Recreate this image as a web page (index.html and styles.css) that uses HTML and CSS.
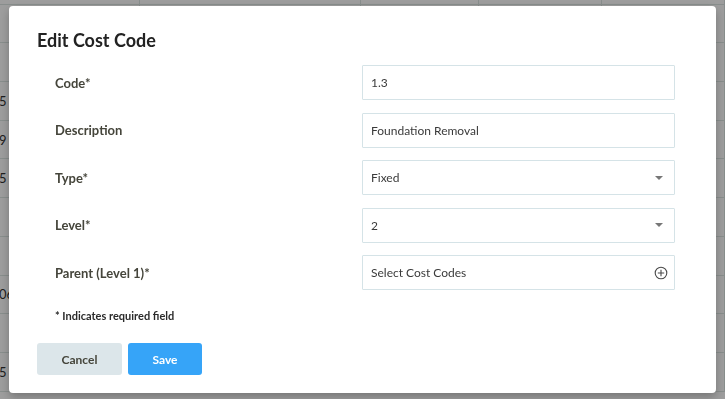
FILE: index.html
```html
<!DOCTYPE html>
<html lang="en">
<head>
    <meta charset="UTF-8">
    <meta name="viewport" content="width=device-width, initial-scale=1.0">
    <title>Edit Cost Code</title>
    <link rel="stylesheet" href="styles.css">
</head>
<body>

<!-- Table behind the modal -->
<div class="sheet">
    <div class="row"><div class="cell"></div><div class="cell"></div><div class="cell"></div><div class="cell"></div><div class="cell"></div></div>
    <div class="row"><div class="cell"></div><div class="cell"></div><div class="cell"></div><div class="cell"></div><div class="cell"></div></div>
    <div class="row"><div class="cell"></div><div class="cell"></div><div class="cell"></div><div class="cell"></div><div class="cell"></div></div>
    <div class="row"><div class="cell">5</div><div class="cell"></div><div class="cell"></div><div class="cell"></div><div class="cell"></div></div>
    <div class="row"><div class="cell">9</div><div class="cell"></div><div class="cell"></div><div class="cell"></div><div class="cell"></div></div>
    <div class="row"><div class="cell">5</div><div class="cell"></div><div class="cell"></div><div class="cell"></div><div class="cell"></div></div>
    <div class="row"><div class="cell"></div><div class="cell"></div><div class="cell"></div><div class="cell"></div><div class="cell"></div></div>
    <div class="row"><div class="cell"></div><div class="cell"></div><div class="cell"></div><div class="cell"></div><div class="cell"></div></div>
    <div class="row"><div class="cell">06</div><div class="cell"></div><div class="cell"></div><div class="cell"></div><div class="cell"></div></div>
    <div class="row"><div class="cell"></div><div class="cell"></div><div class="cell"></div><div class="cell"></div><div class="cell"></div></div>
    <div class="row"><div class="cell">5</div><div class="cell"></div><div class="cell"></div><div class="cell"></div><div class="cell"></div></div>
</div>

<div class="overlay">
    <div class="modal">
        <h2>Edit Cost Code</h2>

        <div class="form-grid">
            <label for="code">Code*</label>
            <input type="text" id="code" class="field" value="1.3">

            <label for="description">Description</label>
            <input type="text" id="description" class="field" value="Foundation Removal">

            <label>Type*</label>
            <div class="field select">
                <span>Fixed</span>
                <svg class="caret" width="8" height="4" viewBox="0 0 8 4"><path d="M0 0h8L4 4z" fill="#777"/></svg>
            </div>

            <label>Level*</label>
            <div class="field select">
                <span>2</span>
                <svg class="caret" width="8" height="4" viewBox="0 0 8 4"><path d="M0 0h8L4 4z" fill="#777"/></svg>
            </div>

            <label>Parent (Level 1)*</label>
            <div class="field select">
                <span>Select Cost Codes</span>
                <svg class="plus" width="14" height="14" viewBox="0 0 14 14">
                    <circle cx="7" cy="7" r="5.8" fill="none" stroke="#4a4a4a" stroke-width="1.1"/>
                    <path d="M7 3.8v6.4M3.8 7h6.4" stroke="#4a4a4a" stroke-width="1.1"/>
                </svg>
            </div>
        </div>

        <p class="note">* Indicates required field</p>

        <div class="actions">
            <button class="btn cancel">Cancel</button>
            <button class="btn save">Save</button>
        </div>
    </div>
</div>

</body>
</html>
```

FILE: styles.css
```css
body {
    font-family: Lato, "Noto Sans", sans-serif;
    background-color: #fff;
    color: #333;
    margin: 0;
    overflow: hidden;
}
.sheet {
    margin-top: -34px;
    margin-left: -1px;
}
.row {
    display: grid;
    grid-template-columns: 141px 221px 118px 123px 1fr;
    height: 38.7px;
    box-sizing: border-box;
    border-bottom: 1px solid #dde6e3;
}
.cell {
    border-right: 1px solid #dde6e3;
    font-size: 13px;
    color: #333;
    display: flex;
    align-items: center;
}
.overlay {
    position: fixed;
    inset: 0;
    background-color: rgba(0, 0, 0, 0.385);
    display: flex;
    justify-content: center;
    align-items: flex-start;
}
.modal {
    background-color: #fff;
    width: 707px;
    box-sizing: border-box;
    margin-top: 6px;
    padding: 22px 41px 18px 28px;
    border-radius: 4px;
    box-shadow: 0 4px 10px rgba(0, 0, 0, 0.25);
}
h2 {
    margin: 0;
    font-size: 18px;
    font-weight: 700;
    color: #222;
    line-height: 24px;
}
.form-grid {
    display: grid;
    grid-template-columns: 1fr 313px;
    row-gap: 12.5px;
    align-items: center;
    margin: 13px 0 0 18px;
}
.form-grid label {
    font-size: 13px;
    font-weight: 700;
    color: #45453b;
}
.field {
    box-sizing: border-box;
    height: 35px;
    width: 100%;
    border: 1px solid #d5e3e7;
    border-radius: 1px;
    padding: 0 8px;
    font-family: inherit;
    font-size: 12px;
    color: #3a3a3a;
    outline: none;
}
.select {
    display: flex;
    align-items: center;
    justify-content: space-between;
}
.caret {
    margin-right: 3px;
}
.plus {
    margin-right: -2px;
}
.note {
    margin: 18px 0 0 18px;
    font-size: 11px;
    font-weight: 700;
    color: #2a2a2a;
    line-height: 16px;
}
.actions {
    display: flex;
    gap: 6px;
    margin-top: 19px;
}
.btn {
    height: 32px;
    border: none;
    border-radius: 3px;
    font-family: inherit;
    font-size: 12px;
    font-weight: 700;
    cursor: pointer;
}
.cancel {
    width: 85px;
    background-color: #dce6ea;
    color: #45453b;
}
.save {
    width: 74px;
    background-color: #36a4f8;
    color: #fff;
}
```
